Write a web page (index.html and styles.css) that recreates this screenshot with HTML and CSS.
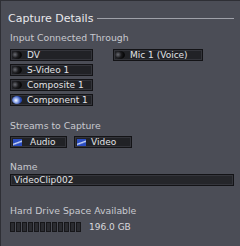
FILE: index.html
```html
<!DOCTYPE html>
<html lang="en">
<head>
    <meta charset="UTF-8">
    <title>Capture Details</title>
    <link rel="stylesheet" href="styles.css">
</head>
<body>
    <div class="panel">
        <div class="panel-title">
            <span>Capture Details</span>
            <div class="rule"></div>
        </div>

        <div class="label">Input Connected Through</div>
        <div class="inputs">
            <div class="col">
                <div class="pill"><span class="radio"></span>DV</div>
                <div class="pill"><span class="radio"></span>S-Video 1</div>
                <div class="pill"><span class="radio"></span>Composite 1</div>
                <div class="pill"><span class="radio on"></span>Component 1</div>
            </div>
            <div class="col">
                <div class="pill wide"><span class="radio"></span>Mic 1 (Voice)</div>
            </div>
        </div>

        <div class="label streams">Streams to Capture</div>
        <div class="checks">
            <div class="pill check"><span class="box"></span>Audio</div>
            <div class="pill check"><span class="box"></span>Video</div>
        </div>

        <div class="label name">Name</div>
        <div class="field">VideoClip002</div>

        <div class="label space">Hard Drive Space Available</div>
        <div class="meter">
            <div class="bar">
                <i></i><i></i><i></i><i></i><i></i><i></i><i></i><i></i><i></i><i></i><i></i><i></i>
            </div>
            <span>196.0 GB</span>
        </div>
    </div>
</body>
</html>
```

FILE: styles.css
```css
body {
    margin: 0;
    background-color: #4b4d56;
    font-family: 'DejaVu Sans', Verdana, sans-serif;
    color: #d8d8dc;
}
.panel {
    width: 240px;
    height: 246px;
    box-sizing: border-box;
    padding: 10px 6px 0 9px;
    border-top: 1px solid #2e2f35;
    border-left: 1px solid #2e2f35;
}
.panel-title {
    display: flex;
    align-items: center;
    gap: 4px;
    margin-left: -2px;
    font-size: 11px;
    color: #e8e8ec;
    height: 14px;
    white-space: nowrap;
}
.rule {
    flex: 1;
    height: 1px;
    margin-top: 1px;
    background-color: #9fa1a9;
}
.label {
    font-size: 9.3px;
    line-height: 12px;
    color: #c8c9cf;
    margin-top: 7px;
    height: 12px;
    white-space: nowrap;
}
.inputs {
    display: flex;
    gap: 20px;
    margin-top: 5px;
}
.col {
    display: flex;
    flex-direction: column;
    gap: 3px;
}
.pill {
    display: flex;
    align-items: center;
    gap: 5px;
    width: 80px;
    height: 10px;
    padding-left: 1px;
    background-color: #212226;
    border: 1px solid #131316;
    box-shadow: inset 0 0 0 1px #33343a;
    font-size: 9px;
    color: #e2e2e6;
    white-space: nowrap;
}
.pill.wide {
    width: 87px;
}
.radio {
    flex: none;
    width: 10px;
    height: 8px;
    border-radius: 50%;
    background: radial-gradient(circle at 30% 45%, #6a6c73 0, #1c1c1f 40%, #080809 70%);
}
.radio.on {
    background: radial-gradient(circle at 40% 55%, #ffffff 0, #a8bcef 25%, #2446b0 65%);
}
.streams {
    margin-top: 14px;
}
.checks {
    display: flex;
    gap: 7px;
    margin-top: 4px;
}
.pill.check {
    width: 53px;
    padding-left: 2px;
    gap: 8px;
}
.pill.check + .pill.check {
    width: 54px;
    gap: 5px;
}
.box {
    flex: none;
    width: 9px;
    height: 7px;
    background: linear-gradient(160deg, #2a4cc0 0, #2a4cc0 40%, #d0dbf6 52%, #2a4cc0 68%);
}
.name {
    margin-top: 13px;
}
.field {
    width: 219px;
    height: 10px;
    margin-top: 1px;
    padding-left: 3px;
    background-color: #25262a;
    border: 1px solid #131316;
    box-shadow: inset 0 0 0 1px #34353b;
    font-size: 9px;
    line-height: 10px;
    color: #e2e2e6;
}
.space {
    margin-top: 19px;
}
.meter {
    display: flex;
    align-items: center;
    gap: 8px;
    margin-top: 5px;
    font-size: 9px;
    color: #d8d8dc;
}
.bar {
    display: flex;
    gap: 1px;
}
.bar i {
    width: 3px;
    height: 8px;
    background-color: #2b2c31;
    border: 1px solid #17171a;
}
```
